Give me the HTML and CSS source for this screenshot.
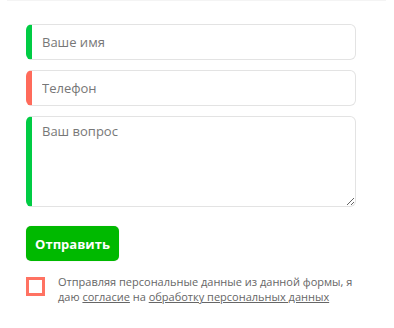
FILE: index.html
```html
<!DOCTYPE html>
<html lang="ru">
<head>
<meta charset="utf-8">
<link rel="stylesheet" href="styles.css">
</head>
<body>
<div class="topline"></div>
<form class="form">
  <div class="field field-ok"><input class="input" type="text" placeholder="Ваше имя"></div>
  <div class="field field-err"><input class="input" type="text" placeholder="Телефон"></div>
  <div class="field field-ok field-area"><textarea class="input area" placeholder="Ваш вопрос"></textarea></div>
  <button class="btn" type="button">Отправить</button>
  <div class="agree">
    <span class="check"></span>
    <p class="agree-text">Отправляя персональные данные из данной формы, я даю <a href="#">согласие</a> на <a href="#">обработку персональных данных</a></p>
  </div>
</form>
</body>
</html>
```
FILE: styles.css
```css
* { box-sizing: border-box; }
html, body { margin: 0; padding: 0; background: #fff; }
body { font-family: "Open Sans", "Noto Sans", sans-serif; width: 394px; height: 328px; overflow: hidden; }
.topline { margin: 0 8px 0 7px; height: 1px; background: #f4f4f4; }
.form { padding: 23px 0 0 26px; display: flex; flex-direction: column; width: 356px; }
.field { border: 1px solid #e3e3e3; border-left: 6px solid #00cc44; border-radius: 6px; background: #fff; height: 36px; margin-bottom: 10px; display: flex; }
.field-err { border-left-color: #ff6b5b; }
.field-area { height: 91px; margin-bottom: 19px; }
.input { border: 0; outline: 0; background: transparent; flex: 1; padding: 0 0 0 10px; font-family: inherit; font-size: 13px; color: #555; }
.input::placeholder { color: #777; }
.area { resize: vertical; padding-top: 5px; line-height: 18px; }
.btn { align-self: flex-start; width: 93px; height: 35px; border: 0; border-radius: 5px; background: #00b900; color: #fff; font-family: inherit; font-weight: 700; font-size: 13px; padding: 0; margin-bottom: 13px; box-shadow: 0 0 1px rgba(0,0,0,0.2); }
.agree { display: flex; align-items: flex-start; gap: 13px; }
.check { flex: none; width: 19px; height: 19px; border: 3px solid #ff7262; margin-top: 3px; }
.agree-text { margin: 0; font-size: 11px; line-height: 15px; color: #666; width: 305px; }
.agree-text a { color: #666; text-decoration: underline; }
```
